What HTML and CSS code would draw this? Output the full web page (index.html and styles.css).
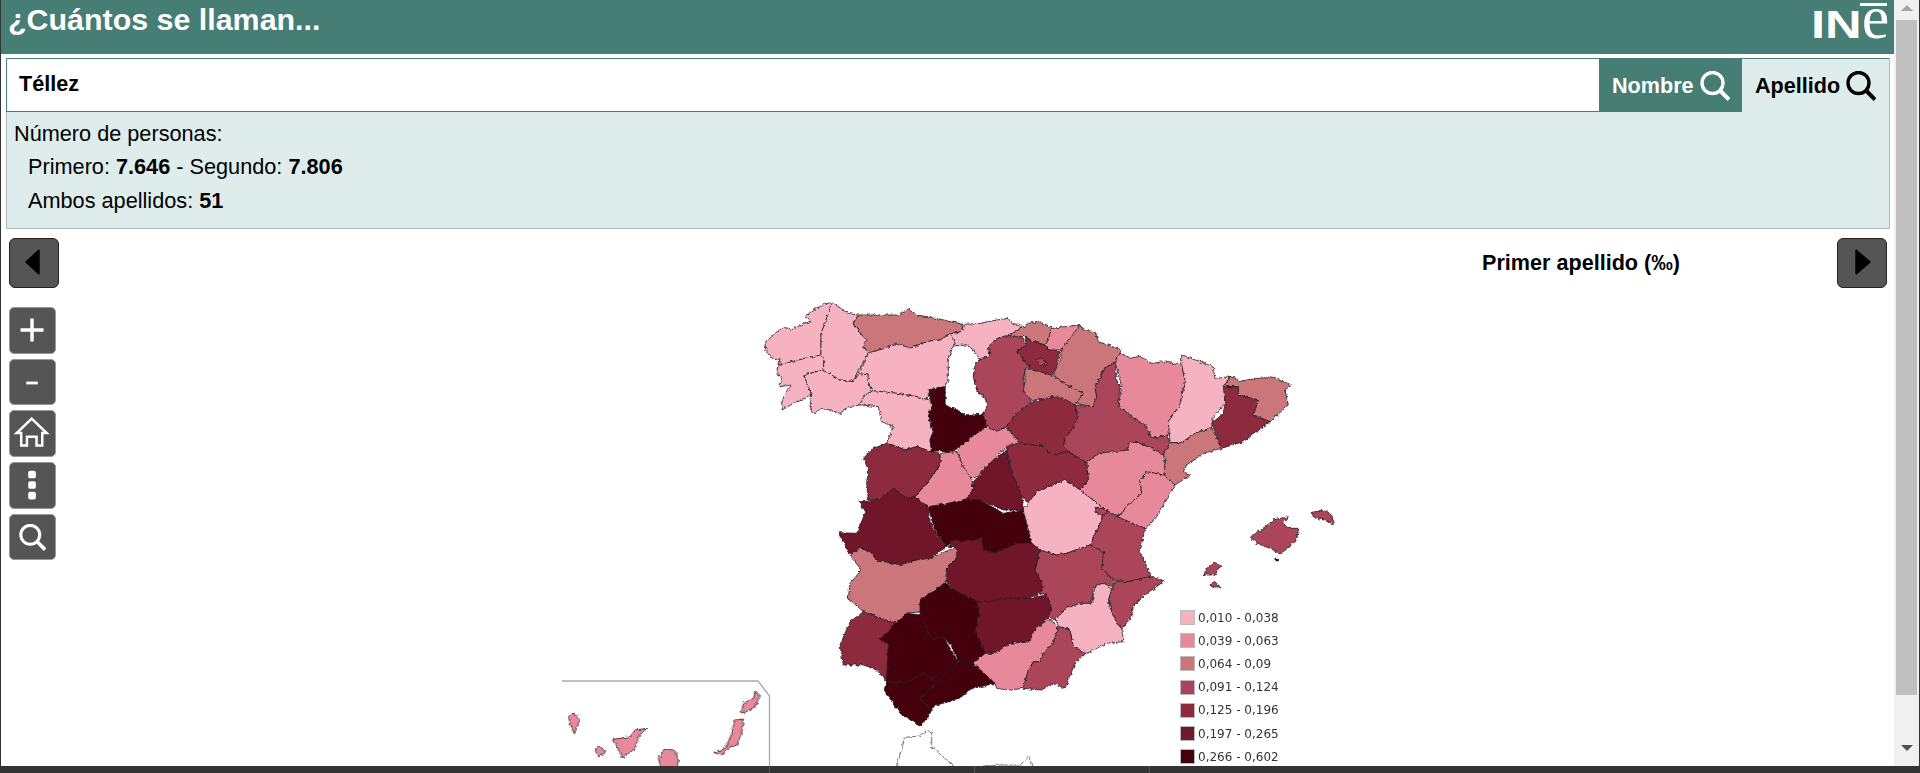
FILE: index.html
```html
<!DOCTYPE html>
<html lang="es">
<head>
<meta charset="utf-8">
<title>¿Cuántos se llaman...</title>
<link rel="stylesheet" href="styles.css">
</head>
<body>
<svg class="defs" width="0" height="0" aria-hidden="true">
  <symbol id="lens" viewBox="0 0 30 30"><circle cx="12.500" cy="12" r="10.500" fill="none" stroke="currentColor" stroke-width="3.400"/><path d="M20 19.500L29 28.500" fill="none" stroke="currentColor" stroke-width="4"/></symbol>
</svg>
<div class="window">
  <div class="page">
    <header class="topbar">
      <h1 class="title">¿Cuántos se llaman...</h1>
      <div class="logo"><span class="logo-in">IN</span><span class="logo-e">e</span></div>
    </header>
    <section class="panel">
      <div class="searchrow">
        <div class="query">Téllez</div>
        <div class="tab tab-on">Nombre <svg class="tab-icon"><use href="#lens"/></svg></div>
        <div class="tab">Apellido <svg class="tab-icon"><use href="#lens"/></svg></div>
      </div>
      <div class="info">
        <p class="info-line">Número de personas:</p>
        <p class="info-line info-sub">Primero: <b>7.646</b> - Segundo: <b>7.806</b></p>
        <p class="info-line info-sub">Ambos apellidos: <b>51</b></p>
      </div>
    </section>
    <main class="stage">
      <svg class="map" viewBox="1 229 1893 537" width="1893" height="537" aria-label="Mapa de provincias">
        <defs>
          <filter id="rough" filterUnits="userSpaceOnUse" x="500" y="280" width="1000" height="500">
            <feTurbulence type="fractalNoise" baseFrequency="0.3" numOctaves="2" seed="4"/>
            <feDisplacementMap in="SourceGraphic" scale="4" xChannelSelector="R" yChannelSelector="G"/>
          </filter>
        </defs>
        <g filter="url(#rough)">
        <g transform="translate(750 290) scale(.33333)" class="prov">
          <polygon class="c1" points="245,38 225,42 190,60 165,80 185,95 160,100 130,118 100,112 75,130 60,145 45,160 48,185 72,210 90,205 85,225 95,225 125,215 165,205 213,195 213,130 225,100"/>
          <polygon class="c1" points="85,225 80,245 95,265 90,290 125,285 105,310 95,340 97,360 130,340 185,315 175,290 162,255 220,240 222,210 213,195 165,205 125,215"/>
          <polygon class="c1" points="245,38 300,72 325,75 310,100 335,135 350,150 340,170 355,190 325,240 310,275 270,270 220,245 222,210 213,195 213,130 225,100"/>
          <polygon class="c1" points="162,255 220,240 270,270 310,275 325,250 355,255 355,275 365,300 335,325 330,345 300,350 270,370 240,360 215,355 190,372 180,350 185,315 175,290"/>
          <polygon class="c3" points="325,75 400,75 445,75 480,58 500,75 545,82 640,103 635,125 600,132 570,150 530,155 480,175 440,160 405,175 360,187 340,170 350,150 335,135 310,100"/>
          <polygon class="c1" points="640,103 690,100 740,90 775,85 785,100 815,105 805,120 780,135 745,145 715,170 720,195 690,210 670,180 650,165 610,168 615,160 600,132 635,125"/>
          <polygon class="c1" points="360,187 405,175 440,160 480,175 530,155 570,150 600,132 615,160 595,205 595,270 585,290 535,300 535,320 525,330 500,320 440,310 365,302 355,275 355,255 325,250 355,190"/>
          <polygon class="c1" points="365,302 440,310 500,320 525,330 535,325 545,345 535,380 550,425 540,450 545,485 500,470 465,480 440,470 410,460 430,410 395,395 385,350 335,345 330,345 335,325"/>
          <polygon class="c0" points="610,168 650,165 670,180 690,210 675,220 670,260 680,300 705,325 715,345 700,372 650,378 620,360 605,355 585,345 585,290 595,270 595,205"/>
          <polygon class="c7" points="535,300 585,290 585,345 605,355 620,360 650,378 700,372 710,410 660,445 630,470 600,490 570,482 545,485 540,450 550,425 535,380 545,345"/>
          <polygon class="c4" points="715,170 745,145 780,135 815,140 830,165 800,185 820,210 845,235 825,240 820,270 825,300 845,335 800,370 770,410 740,425 710,410 700,372 715,345 705,325 680,300 670,260 675,220 690,210 720,195"/>
          <polygon class="c3" points="805,120 835,100 870,95 905,115 895,150 885,165 850,155 825,140 785,140 780,135"/>
          <polygon class="c2" points="905,115 985,105 992,118 935,180 895,180 885,165 895,150"/>
          <polygon class="c3" points="990,105 1000,120 1035,125 1045,155 1115,180 1095,215 1065,235 1035,290 1040,320 1030,350 975,340 1000,310 950,285 910,255 930,210 935,180"/>
          <polygon class="c5" points="825,140 850,155 885,165 895,180 930,185 920,230 905,255 880,255 850,240 820,210 800,185 830,165"/>
          <polygon class="c4" points="858,208 880,205 892,222 872,228"/>
          <polygon class="c3" points="825,235 870,245 910,258 950,285 1000,310 975,345 965,350 940,325 905,320 875,335 865,325 850,335 820,305 825,270"/>
          <polygon class="c5" points="850,335 905,320 940,325 975,345 985,380 965,420 945,445 940,470 955,485 905,495 880,470 810,458 770,410 800,370"/>
          <polygon class="c4" points="1095,215 1100,270 1110,285 1105,345 1145,380 1190,410 1205,445 1250,435 1260,460 1240,495 1195,470 1150,455 1135,480 1080,490 1045,490 1010,518 955,485 940,470 945,445 965,420 985,380 975,345 1030,350 1040,320 1035,290 1065,235"/>
          <polygon class="c2" points="1110,190 1145,205 1170,198 1205,220 1240,215 1295,225 1305,270 1290,345 1255,395 1260,435 1250,435 1205,445 1190,410 1145,380 1105,345 1115,290 1095,215"/>
          <polygon class="c1" points="1295,195 1350,215 1390,230 1395,265 1440,260 1420,290 1425,340 1390,380 1385,412 1335,430 1295,458 1260,458 1255,395 1290,345 1305,270 1295,225"/>
          <polygon class="c3" points="1430,258 1460,265 1465,275 1520,265 1570,262 1625,285 1605,300 1615,345 1560,395 1510,375 1525,330 1465,315 1465,290 1422,290 1440,262"/>
          <polygon class="c5" points="1422,290 1465,290 1465,315 1525,330 1510,375 1560,395 1480,455 1415,475 1385,400 1420,370 1425,340"/>
          <polygon class="c3" points="1385,412 1415,475 1360,490 1310,525 1300,545 1322,555 1275,585 1240,555 1247,505 1240,495 1260,458 1295,458 1335,430"/>
          <polygon class="c2" points="1135,460 1150,455 1195,470 1240,495 1247,525 1240,555 1190,545 1170,570 1175,610 1140,640 1105,680 1060,655 990,600 1015,570 1010,518 1045,490 1135,480"/>
          <polygon class="c2" points="1190,545 1240,555 1275,585 1220,680 1190,715 1150,715 1105,680 1140,640 1175,610 1170,570"/>
          <polygon class="c5" points="770,470 810,458 880,470 905,495 955,485 1010,518 1015,570 990,600 945,570 860,605 840,645 815,620 780,530"/>
          <polygon class="c2" points="620,485 630,470 660,445 710,410 740,425 770,410 805,458 770,470 720,520 680,560 655,570 640,530"/>
          <polygon class="c2" points="570,490 620,485 640,530 670,575 665,610 640,630 595,640 565,650 540,655 495,620 530,580 570,525"/>
          <polygon class="c5" points="410,460 440,470 465,480 500,470 545,485 570,490 570,525 530,580 495,620 470,625 430,595 385,630 355,630 350,580 355,540 340,505 370,475"/>
          <polygon class="c6" points="770,480 780,530 815,620 825,660 760,660 690,630 640,630 665,610 670,575 720,520"/>
          <polygon class="c6" points="330,635 385,630 430,595 470,625 495,620 540,655 535,680 560,735 590,770 540,805 500,810 450,825 380,810 360,785 330,775 300,795 265,728 320,730 345,670"/>
          <polygon class="c7" points="535,650 595,640 640,630 690,630 760,670 820,660 845,760 800,760 735,790 700,780 695,745 640,755 610,750 590,770 560,730 545,690"/>
          <polygon class="c1" points="820,660 860,605 945,570 990,600 1060,655 1055,690 1020,765 950,790 920,795 870,780 845,760"/>
          <polygon class="c4" points="1090,675 1185,715 1170,785 1205,860 1135,875 1090,870 1055,835 1060,785 1020,765 1055,690 1060,655"/>
          <polygon class="c4" points="1035,655 1060,655 1075,665 1060,675 1040,670"/>
          <polygon class="c4" points="1135,875 1205,858 1240,875 1185,915 1150,950 1145,980 1115,1020 1085,970 1075,930 1090,890 1095,875"/>
          <polygon class="c4" points="870,780 920,795 950,790 1020,765 1060,785 1055,835 1090,870 1090,890 1060,880 1030,890 1025,940 990,940 950,955 915,990 895,980 905,950 890,915 870,910 875,880 855,840"/>
          <polygon class="c1" points="915,990 950,955 990,940 1025,940 1035,890 1060,880 1085,895 1075,930 1085,970 1115,1020 1122,1055 1070,1060 1010,1090 970,1070 960,1020 930,1010"/>
          <polygon class="c6" points="595,770 610,750 640,755 695,745 700,780 735,790 800,760 845,760 870,780 855,840 880,890 870,910 830,925 760,925 715,935 680,935 630,910 590,880 590,835 620,805 620,770"/>
          <polygon class="c3" points="300,795 330,775 360,785 380,810 450,825 500,810 540,805 620,770 620,805 590,835 585,880 510,930 515,965 470,970 440,1000 390,985 340,965 295,925 300,880 335,840 310,810"/>
          <polygon class="c6" points="680,935 715,935 760,925 830,925 890,915 905,950 895,980 850,1025 840,1055 780,1060 735,1090 705,1090 675,1020 688,975"/>
          <polygon class="c2" points="895,985 925,1010 910,1060 880,1090 870,1115 850,1115 835,1140 820,1195 780,1200 740,1195 735,1180 675,1140 670,1120 705,1090 735,1090 780,1060 840,1055 850,1025"/>
          <polygon class="c4" points="925,1010 960,1020 970,1070 1005,1090 975,1120 945,1195 910,1180 875,1200 820,1195 835,1140 850,1115 870,1115 880,1090 910,1060"/>
          <polygon class="c7" points="585,880 630,910 680,935 688,975 675,1020 705,1090 670,1120 630,1120 605,1070 580,1040 545,1050 530,1010 510,970 510,930"/>
          <polygon class="c5" points="340,965 390,985 440,1000 435,1025 390,1050 415,1060 410,1175 380,1140 340,1125 280,1125 270,1065 300,995"/>
          <polygon class="c7" points="435,1002 470,970 515,975 545,1050 580,1040 625,1115 565,1175 520,1150 470,1178 410,1175 415,1060 390,1050"/>
          <polygon class="c7" points="670,1120 735,1180 660,1198 635,1220 600,1235 555,1245 545,1260 510,1225 565,1175 625,1115"/>
          <polygon class="c7" points="410,1175 470,1178 520,1150 565,1175 510,1225 545,1260 530,1290 510,1308 450,1270 425,1230 402,1200"/>
          <polygon class="c4" points="1500,740 1540,715 1570,690 1615,680 1600,700 1615,715 1647,715 1640,745 1620,770 1590,792 1560,775 1520,760"/>
          <polygon class="c4" points="1687,667 1725,660 1745,675 1753,703 1720,690 1690,682"/>
          <polygon class="c4" points="1360,855 1370,835 1395,818 1415,825 1395,855"/>
          <polygon class="c4" points="1383,880 1395,875 1410,890 1385,892"/>
          <polygon class="c7" points="1575,805 1583,805 1582,813 1575,813"/>
          <path class="coast" d="M440 1428L465 1342L510 1338L530 1322L545 1327L545 1370L610 1428"/>
          <path class="coast" d="M700 1428L750 1425L810 1425L837 1400L845 1428"/>
        </g>
        <g transform="translate(540 660) scale(.33333)" class="prov">
          <polygon class="c2" points="85,170 95,160 112,165 118,180 112,200 103,222 92,195"/>
          <polygon class="c2" points="165,270 178,259 195,272 190,285 175,290"/>
          <polygon class="c2" points="220,238 270,230 285,210 320,205 300,225 285,265 250,293 235,270"/>
          <polygon class="c2" points="355,295 372,268 405,270 415,300 410,330 365,330"/>
          <polygon class="c2" points="522,278 555,265 570,235 585,180 610,177 605,225 590,255 565,265 545,285"/>
          <polygon class="c2" points="602,160 610,130 640,115 645,95 660,110 645,140 620,155"/>
        </g>
        </g>
        <path class="frame" d="M562 681H758L769.500 696V766"/>
      </svg>
      <div class="nav">
        <button class="square" type="button" aria-label="Anterior"><svg class="arrow" viewBox="0 0 50 50"><path d="M30 12V36L17 24Z"/></svg></button>
        <h2 class="maptitle">Primer apellido (‰)</h2>
        <button class="square" type="button" aria-label="Siguiente"><svg class="arrow" viewBox="0 0 50 50"><path d="M19 12V36L33 24Z"/></svg></button>
      </div>
      <div class="tools">
        <div class="tool"><svg class="tool-icon" viewBox="0 0 47 47"><path d="M11 23H35M23 11V35" stroke-width="3.600"/></svg></div>
        <div class="tool"><svg class="tool-icon" viewBox="0 0 47 47"><path d="M17 24H29" stroke-width="3"/></svg></div>
        <div class="tool"><svg class="tool-icon" viewBox="0 0 47 47"><path d="M22.700 8L7 23H11.700V36H17.700V27H27.700V36H33.700V23H38.300Z" stroke-width="2.600"/></svg></div>
        <div class="tool"><svg class="tool-icon" viewBox="0 0 47 47"><rect class="solid" x="19" y="8" width="8" height="8" rx="2"/><rect class="solid" x="19" y="19" width="8" height="8" rx="2"/><rect class="solid" x="19" y="30" width="8" height="8" rx="2"/></svg></div>
        <div class="tool tool-search"><svg class="tool-lens"><use href="#lens"/></svg></div>
      </div>
      <ul class="legend">
        <li class="legend-row"><span class="swatch s1"></span>0,010 - 0,038</li>
        <li class="legend-row"><span class="swatch s2"></span>0,039 - 0,063</li>
        <li class="legend-row"><span class="swatch s3"></span>0,064 - 0,09</li>
        <li class="legend-row"><span class="swatch s4"></span>0,091 - 0,124</li>
        <li class="legend-row"><span class="swatch s5"></span>0,125 - 0,196</li>
        <li class="legend-row"><span class="swatch s6"></span>0,197 - 0,265</li>
        <li class="legend-row"><span class="swatch s7"></span>0,266 - 0,602</li>
      </ul>
    </main>
  </div>
  <div class="scrollbar">
    <span class="sb-up"></span>
    <span class="sb-thumb"></span>
    <span class="sb-down"></span>
  </div>
</div>
<footer class="strip">
  <span class="strip-cell cell-a"></span>
  <span class="strip-cell cell-b"></span>
  <span class="strip-cell cell-c"></span>
</footer>
</body>
</html>
```
FILE: styles.css
```css
* { box-sizing: border-box; }
html, body { margin: 0; height: 100%; }
body {
  width: 1920px;
  height: 773px;
  overflow: hidden;
  background: #fff;
  color: #000;
  font-family: "Liberation Sans", Arial, sans-serif;
  border-left: 1px solid #333;
  border-right: 1px solid #333;
  display: flex;
  flex-direction: column;
}
.defs { position: absolute; }
.window { flex: 1; display: flex; min-height: 0; }
.page { flex: 1; display: flex; flex-direction: column; min-width: 0; }

.topbar {
  height: 54px;
  flex: none;
  background: #467d74;
  color: #fff;
  display: flex;
  justify-content: space-between;
  padding: 0 5px 0 7px;
}
.title { margin: 0; font-size: 30.400px; line-height: 39px; font-weight: 700; }
.logo { display: flex; align-items: flex-start; width: 78px; }
.logo-in {
  font-size: 39px;
  line-height: 49px;
  font-weight: 700;
  width: 50.700px;
  flex: none;
  transform: scaleX(1.3);
  transform-origin: left center;
}
.logo-e { font-family: "Liberation Serif", serif; font-size: 62px; line-height: 35px; position: relative; flex: none; }
.logo-e::before { content: ""; position: absolute; left: -2px; right: 2px; top: 3px; height: 3px; background: #fff; }

.panel {
  flex: none;
  margin: 4px 4px 0 5px;
  height: 171px;
  background: #deedeb;
  border: 1px solid #a9bcb9;
  border-top: 0;
  display: flex;
  flex-direction: column;
}
.searchrow { display: flex; height: 54px; flex: none; border-top: 1px solid #467d74; }
.query {
  flex: 1;
  background: #fff;
  border-bottom: 1px solid #467d74;
  border-left: 1px solid #467d74;
  margin-left: -1px;
  font-size: 21.600px;
  font-weight: 700;
  padding-left: 12px;
  line-height: 50px;
}
.tab {
  width: 147px;
  display: flex;
  align-items: center;
  gap: 6px;
  padding-left: 13px;
  font-size: 21.600px;
  font-weight: 700;
}
.tab-on { width: 143px; background: #467d74; color: #fff; }
.tab-icon { width: 30px; height: 30px; flex: none; }
.info { padding: 5px 7px 0; }
.info-line { margin: 0; font-size: 21.700px; line-height: 33px; }
.info-sub { padding-left: 14px; }
.info-sub + .info-sub { margin-top: 1px; }

.stage { flex: 1; position: relative; overflow: hidden; min-height: 0; }
.map { position: absolute; left: 0; top: 0; display: block; }
.prov polygon { stroke: #1d1d1d; stroke-width: 2.400; stroke-linejoin: round; }
.coast { fill: none; stroke: #555; stroke-width: 2.400; }
.frame { fill: none; stroke: #aaa; stroke-width: 1.300; }
.c0 { fill: #fff; }
.c1, .s1 { fill: #f7b2c1; background: #f7b2c1; }
.c2, .s2 { fill: #e8899b; background: #e8899b; }
.c3, .s3 { fill: #cb767a; background: #cb767a; }
.c4, .s4 { fill: #ab445a; background: #ab445a; }
.c5, .s5 { fill: #8e2a3e; background: #8e2a3e; }
.c6, .s6 { fill: #71182b; background: #71182b; }
.c7, .s7 { fill: #45000f; background: #45000f; }

.nav { position: relative; display: flex; align-items: center; padding: 9px 7px 0 8px; }
.square {
  width: 50px;
  height: 50px;
  padding: 0;
  background: #555;
  border: 1px solid #222;
  border-radius: 6px;
}
.arrow { display: block; width: 48px; height: 48px; }
.arrow path { fill: #000; stroke: #000; stroke-width: 2; stroke-linejoin: round; }
.maptitle { margin: 0 157px 0 auto; font-size: 21.600px; font-weight: 700; }

.tools { position: absolute; left: 8px; top: 78px; display: flex; flex-direction: column; gap: 5px; }
.tool {
  width: 47px;
  height: 46.700px;
  background: #555;
  border: 1px solid #999;
  border-radius: 5px;
  display: flex;
  align-items: center;
  justify-content: center;
}
.tool-icon { width: 45px; height: 45px; }
.tool-icon path { fill: none; stroke: #fff; }
.solid { fill: #fff; }
.tool-lens { width: 27px; height: 27px; color: #fff; }

.legend {
  position: absolute;
  left: 1179px;
  top: 377px;
  margin: 0;
  padding: 0;
  list-style: none;
  display: flex;
  flex-direction: column;
  font-family: "DejaVu Sans", Verdana, sans-serif;
  font-size: 12px;
  color: #333;
}
.legend-row { display: flex; align-items: center; gap: 3px; height: 23.200px; }
.swatch { width: 15px; height: 15px; border: 1px solid #bbb; }

.scrollbar { width: 25px; flex: none; background: #f0f0f0; position: relative; display: flex; flex-direction: column; align-items: center; }
.sb-up { margin-top: 5px; width: 0; height: 0; border: 6px solid transparent; border-top: 0; border-bottom: 6px solid #a3a3a3; }
.sb-thumb { margin-top: 9px; width: 21px; height: 675px; background: #c0c0c0; }
.sb-down { margin-top: 50px; width: 0; height: 0; border: 6px solid transparent; border-bottom: 0; border-top: 6px solid #505050; }

.strip { height: 7px; flex: none; background: #333; display: flex; position: relative; z-index: 1; }
.strip-cell { border-right: 1px solid #555; height: 7px; }
.cell-a { width: 769px; }
.cell-b { width: 205px; }
.cell-c { width: 175px; }
```
